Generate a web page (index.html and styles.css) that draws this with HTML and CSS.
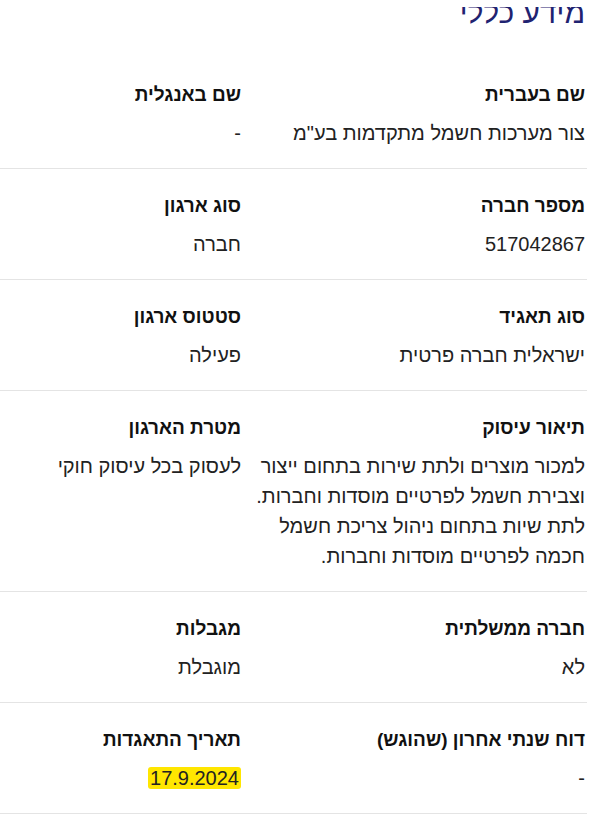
FILE: index.html
```html
<!DOCTYPE html>
<html lang="he" dir="rtl">
<head>
<meta charset="utf-8">
<link rel="stylesheet" href="styles.css">
</head>
<body>
<main class="page">
  <header class="title-wrap">
    <div class="title-clip"><h2 class="title">מידע כללי</h2></div>
  </header>
  <section class="info">
    <div class="row">
      <div class="field"><div class="label">שם בעברית</div><div class="value">צור מערכות חשמל מתקדמות בע"מ</div></div>
      <div class="field"><div class="label">שם באנגלית</div><div class="value">-</div></div>
    </div>
    <div class="row">
      <div class="field"><div class="label">מספר חברה</div><div class="value">517042867</div></div>
      <div class="field"><div class="label">סוג ארגון</div><div class="value">חברה</div></div>
    </div>
    <div class="row">
      <div class="field"><div class="label">סוג תאגיד</div><div class="value">ישראלית חברה פרטית</div></div>
      <div class="field"><div class="label">סטטוס ארגון</div><div class="value">פעילה</div></div>
    </div>
    <div class="row">
      <div class="field"><div class="label">תיאור עיסוק</div><div class="value multi">למכור מוצרים ולתת שירות בתחום ייצור וצבירת חשמל לפרטיים מוסדות וחברות.<br>לתת שיות בתחום ניהול צריכת חשמל חכמה לפרטיים מוסדות וחברות.</div></div>
      <div class="field"><div class="label">מטרת הארגון</div><div class="value">לעסוק בכל עיסוק חוקי</div></div>
    </div>
    <div class="row">
      <div class="field"><div class="label">חברה ממשלתית</div><div class="value">לא</div></div>
      <div class="field"><div class="label">מגבלות</div><div class="value">מוגבלת</div></div>
    </div>
    <div class="row">
      <div class="field"><div class="label">דוח שנתי אחרון (שהוגש)</div><div class="value">-</div></div>
      <div class="field"><div class="label">תאריך התאגדות</div><div class="value"><mark class="hl">17.9.2024</mark></div></div>
    </div>
  </section>
</main>
</body>
</html>
```
FILE: styles.css
```css
* { box-sizing: border-box; }
html, body { margin: 0; padding: 0; background: #fff; }
body {
  font-family: "Liberation Sans", "DejaVu Sans", sans-serif;
  color: #1a1a1a;
  width: 603px;
  overflow: hidden;
}
.page {
  width: 587px;
  margin-left: 0;
  margin-right: auto;
}
.title-wrap {
  height: 58px;
  padding-top: 7px;
}
.title-clip {
  overflow: hidden;
  height: 26px;
}
.title {
  margin: -9px 0 0 0;
  padding: 0 2px 0 0;
  font-size: 30px;
  font-weight: 400;
  line-height: 30px;
  color: #1f2371;
}
.row {
  display: grid;
  grid-template-columns: 340px 1fr;
  column-gap: 4px;
  padding: 22px 2px 20px 0;
  border-bottom: 1px solid #e4e4e4;
}
.label {
  font-size: 19px;
  font-weight: 700;
  line-height: 30px;
  color: #111;
}
.value {
  margin-top: 8px;
  font-size: 20px;
  line-height: 30px;
  color: #222;
}
.hl {
  background: #ffe600;
  color: #222;
  padding: 0 2px;
  border-radius: 3px;
}
```
